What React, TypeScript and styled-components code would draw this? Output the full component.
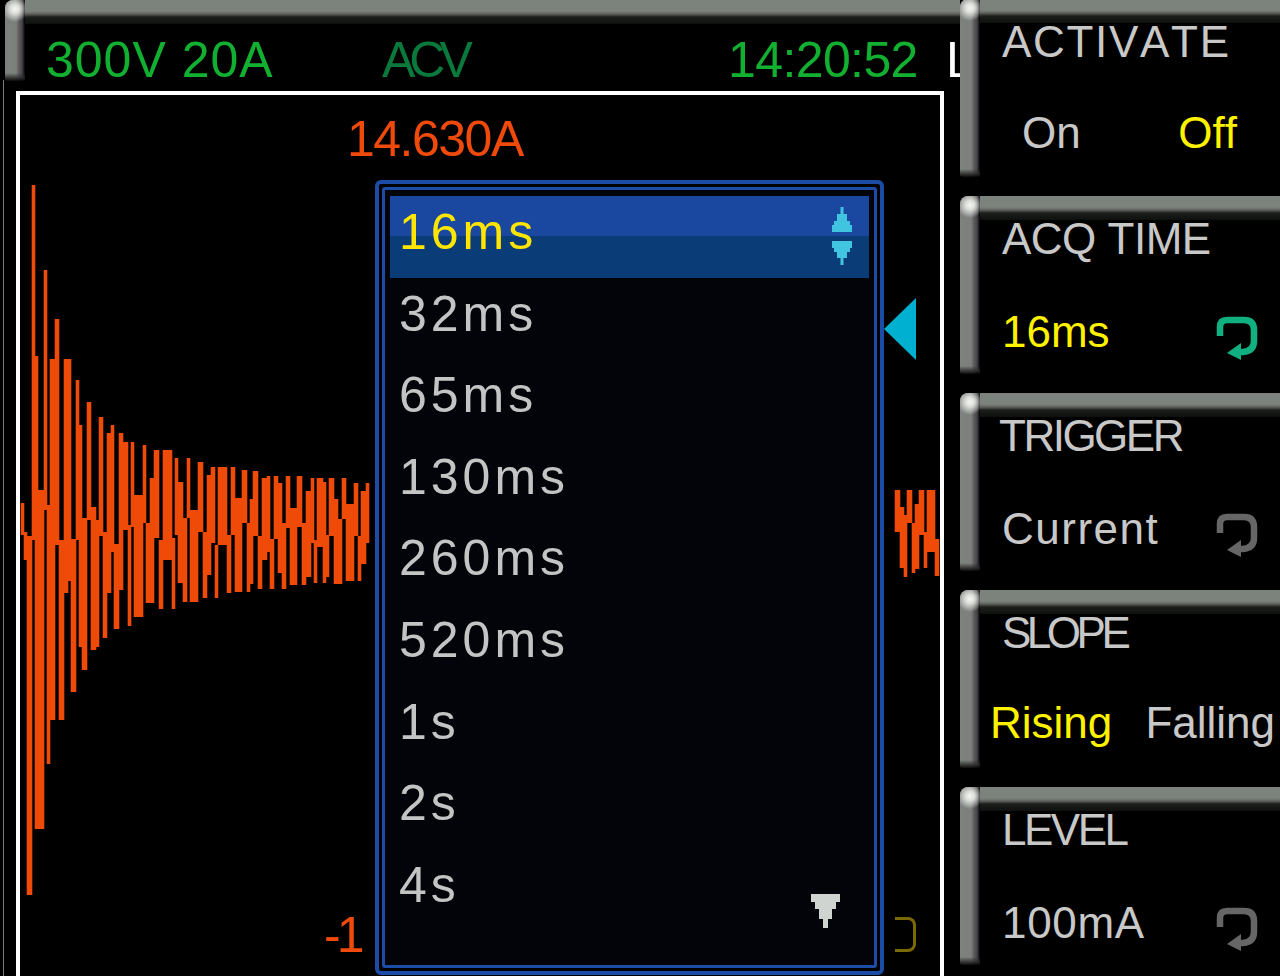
import React from "react";
import styled, { createGlobalStyle, css } from "styled-components";

const Global = createGlobalStyle`
  html, body { margin: 0; padding: 0; background: #000; }
  body { font-family: "Liberation Sans", Arial, sans-serif; font-kerning: none; }
`;

const bevel = css`
  position: relative;
  &::before {
    content: "";
    position: absolute;
    left: 0; right: 0; top: 0;
    height: 24px;
    background: linear-gradient(180deg, #7c827c 0, #7c827c 11px, #6c706c 13px, #4a4c4a 15px, #1c1e1c 17px, #0e100e 24px);
    border-top-left-radius: 8px;
  }
  &::after {
    content: "";
    position: absolute;
    left: 0; top: 0; bottom: 0;
    width: 20px;
    border-radius: 8px 0 0 2px;
    background:
      radial-gradient(circle 13px at 10px 9px, #f6f8f4 0, #dcdeda 35%, rgba(200, 202, 198, 0) 100%),
      linear-gradient(180deg, rgba(0, 0, 0, 0) calc(100% - 8px), rgba(40, 40, 40, 0.85) calc(100% - 3px), rgba(0, 0, 0, 0.9) 100%),
      linear-gradient(90deg, #7e827e 0, #7c807c 55%, #5a565a 72%, #46444a 85%, #000 100%);
  }
`;

const Page = styled.div`
  width: 1280px;
  height: 976px;
  overflow: hidden;
  background: #000;
  display: flex;
`;

const Screen = styled.div`
  width: 960px;
  height: 976px;
  flex: none;
  overflow: hidden;
`;

const StatusPanel = styled.div`
  ${bevel}
  height: 81px;
  margin-left: 5px;
  margin-bottom: 10px;
  padding: 35px 0 0 41px;
  box-sizing: border-box;
  display: grid;
  grid-template-columns: 336px 346px 218px 40px;
`;

const StatusText = styled.span<{ $color: string; $spacing: number }>`
  font-size: 50px;
  line-height: 50px;
  color: ${(p) => p.$color};
  letter-spacing: ${(p) => p.$spacing}px;
  white-space: pre;
`;

const ScreenBody = styled.div`
  margin-left: 3px;
  padding-left: 12px;
  border-left: 1px solid #7c7c7c;
  margin-top: -11px;
  padding-top: 11px;
`;

const Plot = styled.div`
  position: relative;
  width: 920px;
  height: 900px;
  border: 4px solid #fff;
`;

const Wave = styled.svg`
  position: absolute;
  left: 0;
  top: 0;
`;

const Readout = styled.span<{ $left: number; $top: number; $spacing?: number }>`
  position: absolute;
  left: ${(p) => p.$left}px;
  top: ${(p) => p.$top}px;
  font-size: 50px;
  line-height: 50px;
  color: #f04a0a;
  letter-spacing: ${(p) => p.$spacing ?? 0}px;
  white-space: pre;
`;

const Bracket = styled.span`
  position: absolute;
  left: 875px;
  top: 822px;
  width: 18px;
  height: 29px;
  border: 3px solid #7a6a00;
  border-left: none;
  border-radius: 0 8px 8px 0;
`;

const Pointer = styled.svg`
  position: absolute;
  left: 864px;
  top: 203px;
`;

const Dropdown = styled.div`
  position: absolute;
  left: 355px;
  top: 85px;
  width: 495px;
  height: 781px;
  border: 4px solid #1c4ca8;
  border-radius: 6px;
  padding: 3px;
  background: #000;
`;

const DropdownInner = styled.div`
  position: relative;
  width: 479px;
  height: 769px;
  border: 3px solid #1c4ca8;
  border-radius: 3px;
  padding: 6px 5px 0 5px;
  background: #020409;
  box-sizing: content-box;
`;

const Option = styled.div<{ $selected?: boolean }>`
  height: 81.6px;
  box-sizing: border-box;
  padding: 11px 17px 0 9px;
  display: flex;
  justify-content: space-between;
  font-size: 50px;
  line-height: 50px;
  letter-spacing: 4px;
  color: ${(p) => (p.$selected ? "#ffe600" : "#c4c4c4")};
  background: ${(p) =>
    p.$selected
      ? "linear-gradient(180deg, #1a48a0 0, #1a48a0 40px, #0a3c78 40px, #0a3c78 100%)"
      : "transparent"};
`;

const Spinner = styled.svg`
  flex: none;
`;

const MoreArrow = styled.svg`
  position: absolute;
  left: 426px;
  top: 704px;
`;

const Softkeys = styled.div`
  width: 320px;
  flex: none;
  margin-top: -1px;
  display: flex;
  flex-direction: column;
  gap: 19px;
`;

const Softkey = styled.div`
  ${bevel}
  height: 178px;
  flex: none;
  box-sizing: border-box;
  padding: 21px 0 0 42px;
`;

const KeyTitle = styled.div<{ $spacing?: number; $shift?: number }>`
  font-size: 44px;
  line-height: 44px;
  color: #c8c8c8;
  letter-spacing: ${(p) => p.$spacing ?? 0}px;
  margin-left: ${(p) => p.$shift ?? 0}px;
  white-space: pre;
`;

const KeyRow = styled.div<{ $top: number; $left?: number; $right: number }>`
  display: flex;
  justify-content: space-between;
  align-items: flex-start;
  margin-top: ${(p) => p.$top}px;
  margin-left: ${(p) => p.$left ?? 0}px;
  padding-right: ${(p) => p.$right}px;
`;

const KeyValue = styled.span<{ $on?: boolean; $spacing?: number }>`
  font-size: 44px;
  line-height: 44px;
  color: ${(p) => (p.$on ? "#fff200" : "#c8c8c8")};
  letter-spacing: ${(p) => p.$spacing ?? 0}px;
  white-space: pre;
`;

const Knob = styled.svg`
  flex: none;
  margin-top: 6px;
`;

type Seg = [number, number, number, number];

const segments: Seg[] = [
  [21, 24, 503, 535], [24, 27, 532, 560], [27, 32, 536, 895], [32, 35, 185, 540],
  [35, 38, 356, 829], [38, 44, 490, 829], [44, 47, 270, 510], [47, 50, 505, 764],
  [50, 55, 359, 720], [55, 59, 319, 545], [59, 64, 540, 720], [64, 68, 359, 593],
  [68, 71, 359, 581], [71, 76, 539, 692], [76, 79, 380, 540], [79, 82, 425, 647],
  [82, 87, 518, 670], [87, 91, 402, 520], [91, 96, 507, 650], [96, 99, 520, 647],
  [99, 103, 417, 536], [103, 107, 532, 638], [107, 111, 433, 593], [111, 114, 425, 552],
  [114, 119, 544, 629], [119, 123, 433, 590], [123, 128, 442, 530], [128, 131, 525, 626],
  [131, 134, 442, 527], [134, 143, 495, 617], [143, 146, 445, 523], [146, 150, 523, 603],
  [150, 154, 478, 603], [154, 159, 450, 538], [159, 163, 540, 609], [163, 172, 450, 560],
  [172, 175, 538, 609], [175, 178, 458, 535], [178, 183, 482, 583], [183, 187, 518, 602],
  [187, 190, 458, 518], [190, 198, 510, 602], [198, 203, 462, 532], [203, 207, 532, 598],
  [207, 211, 475, 575], [211, 215, 467, 543], [215, 218, 545, 598], [218, 227, 467, 545],
  [227, 231, 535, 593], [231, 235, 467, 535], [235, 242, 498, 592], [242, 247, 470, 523],
  [247, 250, 523, 592], [250, 253, 499, 584], [253, 258, 471, 536], [258, 262, 536, 589],
  [262, 267, 478, 560], [267, 270, 476, 552], [270, 274, 539, 589], [274, 278, 476, 539],
  [278, 282, 483, 573], [282, 286, 523, 589], [286, 290, 476, 528], [290, 297, 508, 585],
  [297, 302, 476, 527], [302, 306, 523, 585], [306, 311, 491, 577], [311, 314, 478, 543],
  [314, 317, 540, 583], [317, 323, 478, 547], [323, 326, 482, 583], [326, 329, 535, 577],
  [329, 334, 478, 536], [334, 338, 499, 584], [338, 342, 519, 584], [342, 346, 478, 519],
  [346, 354, 504, 581], [354, 358, 483, 536], [358, 361, 536, 581], [361, 366, 491, 564],
  [366, 369, 483, 543],
  [895, 900, 490, 532], [900, 904, 507, 568], [904, 907, 515, 577], [907, 912, 490, 523],
  [912, 915, 523, 573], [915, 919, 504, 569], [919, 924, 490, 535], [924, 927, 532, 568],
  [927, 935, 490, 552], [935, 939, 539, 576],
];

const options = ["16ms", "32ms", "65ms", "130ms", "260ms", "520ms", "1s", "2s", "4s"];

const KnobIcon = ({ color }: { color: string }) => (
  <Knob width="42" height="44" viewBox="0 0 42 44">
    <path d="M4 20V11Q4 4 11 4H28Q38 4 38 14V25Q38 35 27 36H20" fill="none" stroke={color} strokeWidth="6.5" />
    <path d="M25 27V44L11 37Z" fill={color} />
  </Knob>
);

export default function App() {
  return (
    <Page>
      <Global />
      <Screen>
        <StatusPanel>
          <StatusText $color="#12b030" $spacing={1}>300V 20A</StatusText>
          <StatusText $color="#0a7a3c" $spacing={-6}>ACV</StatusText>
          <StatusText $color="#12b030" $spacing={-0.6}>14:20:52</StatusText>
          <StatusText $color="#ffffff" $spacing={0}>L</StatusText>
        </StatusPanel>
        <ScreenBody>
          <Plot>
            <Wave width="920" height="900" viewBox="20 95 920 900">
              {segments.map(([x0, x1, top, bottom]) => (
                <rect key={`${x0}-${top}`} x={x0 - 0.3} y={top} width={x1 - x0 + 0.6} height={bottom - top} fill="#ee4a08" />
              ))}
            </Wave>
            <Readout $left={327} $top={19} $spacing={-1.5}>14.630A</Readout>
            <Readout $left={304} $top={815} $spacing={-4}>-1</Readout>
            <Bracket />
            <Pointer width="32" height="62" viewBox="0 0 32 62">
              <path d="M0 31L32 0V62Z" fill="#00b0d0" />
            </Pointer>
            <Dropdown>
              <DropdownInner>
                {options.map((o, i) => (
                  <Option key={o} $selected={i === 0}>
                    {o}
                    {i === 0 && (
                      <Spinner width="20" height="58" viewBox="0 0 20 58">
                        <path d="M8.5 0H11.5V7H15V14H18V18H20V25H0V18H2V14H5V7H8.5Z" fill="#40c4e0" />
                        <path d="M0 34H20V41H18V45H15V51H11.5V58H8.5V51H5V45H2V41H0Z" fill="#40c4e0" />
                      </Spinner>
                    )}
                  </Option>
                ))}
                <MoreArrow width="29" height="34" viewBox="0 0 29 34">
                  <path d="M0 0H29V8H25V15H21V25H17V34H12V25H8V15H4V8H0Z" fill="#d0d4d0" />
                </MoreArrow>
              </DropdownInner>
            </Dropdown>
          </Plot>
        </ScreenBody>
      </Screen>
      <Softkeys>
        <Softkey>
          <KeyTitle $spacing={1.7}>ACTIVATE</KeyTitle>
          <KeyRow $top={47} $left={20} $right={43}>
            <KeyValue>On</KeyValue>
            <KeyValue $on>Off</KeyValue>
          </KeyRow>
        </Softkey>
        <Softkey>
          <KeyTitle $spacing={-0.5}>ACQ TIME</KeyTitle>
          <KeyRow $top={49} $right={22}>
            <KeyValue $on>16ms</KeyValue>
            <KnobIcon color="#10b080" />
          </KeyRow>
        </Softkey>
        <Softkey>
          <KeyTitle $spacing={-2.5} $shift={-3}>TRIGGER</KeyTitle>
          <KeyRow $top={49} $right={22}>
            <KeyValue $spacing={1.5}>Current</KeyValue>
            <KnobIcon color="#666666" />
          </KeyRow>
        </Softkey>
        <Softkey>
          <KeyTitle $spacing={-4.5}>SLOPE</KeyTitle>
          <KeyRow $top={46} $left={-12} $right={5}>
            <KeyValue $on>Rising</KeyValue>
            <KeyValue>Falling</KeyValue>
          </KeyRow>
        </Softkey>
        <Softkey>
          <KeyTitle $spacing={-2.5}>LEVEL</KeyTitle>
          <KeyRow $top={49} $right={22}>
            <KeyValue $spacing={0.7}>100mA</KeyValue>
            <KnobIcon color="#666666" />
          </KeyRow>
        </Softkey>
      </Softkeys>
    </Page>
  );
}
